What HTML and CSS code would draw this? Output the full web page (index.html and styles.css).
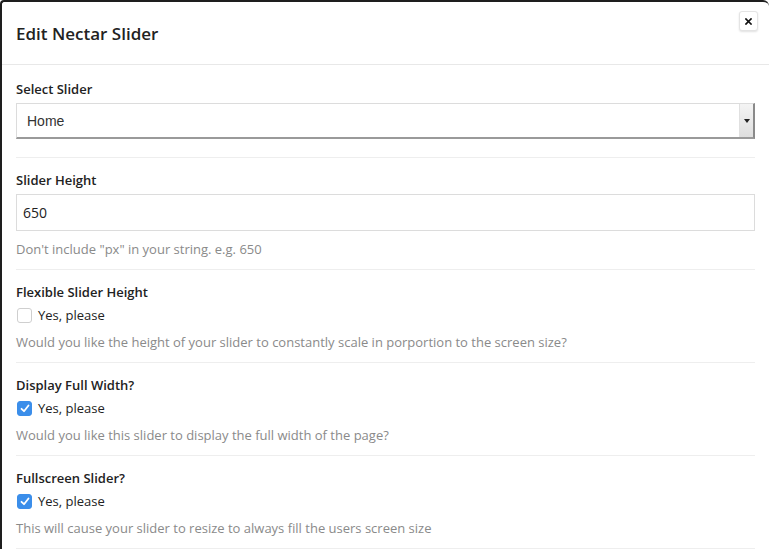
FILE: index.html
```html
<!DOCTYPE html>
<html>
<head>
<meta charset="utf-8">
<link rel="stylesheet" href="styles.css">
</head>
<body>
<div class="modal">
  <div class="modal-header">
    <h1 class="title">Edit Nectar Slider</h1>
    <button class="close" type="button">
      <svg width="7" height="7" viewBox="0 0 7 7"><path d="M1 1L6 6M6 1L1 6" stroke="#111" stroke-width="1.7" stroke-linecap="square"/></svg>
    </button>
  </div>
  <div class="modal-body">
    <div class="field first">
      <div class="label">Select Slider</div>
      <div class="select">
        <span class="select-value">Home</span>
        <span class="select-arrow"><span class="tri"></span></span>
      </div>
    </div>
    <div class="field">
      <div class="label">Slider Height</div>
      <div class="input">650</div>
      <div class="help after-input">Don't include "px" in your string. e.g. 650</div>
    </div>
    <div class="field">
      <div class="label">Flexible Slider Height</div>
      <div class="check-row"><span class="box"></span><span class="check-text">Yes, please</span></div>
      <div class="help">Would you like the height of your slider to constantly scale in porportion to the screen size?</div>
    </div>
    <div class="field">
      <div class="label">Display Full Width?</div>
      <div class="check-row"><span class="box checked"><svg width="10" height="9" viewBox="0 0 10 9"><path d="M1.5 4.8L4 7.2L8.5 1.5" fill="none" stroke="#fff" stroke-width="1.8" stroke-linecap="round" stroke-linejoin="round"/></svg></span><span class="check-text">Yes, please</span></div>
      <div class="help">Would you like this slider to display the full width of the page?</div>
    </div>
    <div class="field">
      <div class="label">Fullscreen Slider?</div>
      <div class="check-row"><span class="box checked"><svg width="10" height="9" viewBox="0 0 10 9"><path d="M1.5 4.8L4 7.2L8.5 1.5" fill="none" stroke="#fff" stroke-width="1.8" stroke-linecap="round" stroke-linejoin="round"/></svg></span><span class="check-text">Yes, please</span></div>
      <div class="help">This will cause your slider to resize to always fill the users screen size</div>
    </div>
  </div>
</div>
</body>
</html>
```
FILE: styles.css
```css
html, body {
  margin: 0;
  padding: 0;
  background: #fff;
}
body {
  font-family: "Open Sans", "Noto Sans", sans-serif;
  color: #333;
  width: 769px;
  height: 549px;
  overflow: hidden;
}
.modal {
  box-sizing: border-box;
  width: 769px;
  height: 560px;
  border-top: 2px solid #1e1e1e;
  border-left: 2px solid #1e1e1e;
  border-radius: 4px 6px 0 0;
  background: #fff;
}
.modal-header {
  display: flex;
  align-items: flex-start;
  justify-content: space-between;
  height: 62px;
  border-bottom: 1px solid #e8e8e8;
  padding: 0 11px 0 14px;
}
.title {
  margin: 20px 0 0;
  font-size: 17px;
  font-weight: 600;
  line-height: 24px;
  color: #222;
}
.close {
  margin-top: 9px;
  width: 19px;
  height: 20px;
  padding: 0;
  border: 1px solid #e4e4e4;
  border-radius: 3px;
  background: #fff;
  box-shadow: 0 1px 2px rgba(0,0,0,0.12);
  display: flex;
  align-items: center;
  justify-content: center;
}
.modal-body {
  padding: 0 14px 0 14px;
}
.field {
  border-bottom: 1px solid #eeeeee;
  padding: 12px 0 10px;
}
.field.first {
  padding-top: 14px;
  padding-bottom: 18px;
}
.label {
  font-size: 13px;
  font-weight: 600;
  line-height: 20px;
  color: #222;
}
.select {
  margin-top: 4px;
  height: 36px;
  box-sizing: border-box;
  border: 1px solid #dcdcdc;
  border-right: 2px solid #8a8a8a;
  border-bottom: 2px solid #9a9a9a;
  display: flex;
  align-items: stretch;
}
.select-value {
  flex: 1;
  font-family: "Liberation Sans", Arial, sans-serif;
  font-size: 14px;
  line-height: 34px;
  padding-left: 10px;
  color: #333;
}
.select-arrow {
  width: 13px;
  background: linear-gradient(#f4f4f4, #dedede);
  border-left: 1px solid #e0e0e0;
  display: flex;
  align-items: center;
  justify-content: center;
}
.tri {
  width: 0;
  height: 0;
  border-left: 3px solid transparent;
  border-right: 3px solid transparent;
  border-top: 4px solid #222;
}
.input {
  margin-top: 4px;
  height: 37px;
  box-sizing: border-box;
  border: 1px solid #dcdcdc;
  font-size: 14px;
  line-height: 35px;
  padding-left: 6px;
  color: #222;
}
.help {
  margin-top: 7px;
  font-size: 13px;
  line-height: 20px;
  color: #8a8a8a;
}
.help.after-input {
  margin-top: 8px;
}
.check-row {
  display: flex;
  align-items: center;
  margin-top: 3px;
  height: 20px;
}
.box {
  box-sizing: border-box;
  width: 15px;
  height: 15px;
  border: 1px solid #cfcfcf;
  border-radius: 3px;
  margin-left: 1px;
  margin-right: 6px;
  display: flex;
  align-items: center;
  justify-content: center;
}
.box.checked {
  background: #3b8eea;
  border-color: #3b8eea;
}
.check-text {
  font-size: 13px;
  line-height: 20px;
  color: #222;
}
```
